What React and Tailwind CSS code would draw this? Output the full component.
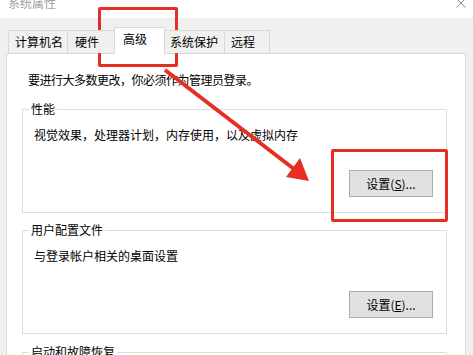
import React from 'react';

const tabs = [
  { label: '计算机名', w: 'w-[59px]', pl: 'pl-[6px]', cls: 'border-l' },
  { label: '硬件', w: 'w-[47px]', pl: 'pl-[7px]', cls: 'border-l' },
  { label: '高级', w: 'w-[51px]', pl: 'pl-[8px]', cls: 'border-l border-r', active: true },
  { label: '系统保护', w: 'w-[59px]', pl: 'pl-[5px]', cls: '' },
  { label: '远程', w: 'w-[46px]', pl: 'pl-[6px]', cls: 'border-l border-r' },
];

const SettingsButton = ({ hotkey }) => (
  <div className="flex justify-end mt-[28px] pr-[13px]">
    <button className="w-[84px] h-[27px] bg-[#e1e1e1] border border-[#adadad] text-[12px] leading-[14px] text-black">
      设置(<span className="underline">{hotkey}</span>)...
    </button>
  </div>
);

const Group = ({ title, desc, hotkey, className = '' }) => (
  <fieldset className={`border border-[#dcdcdc] ml-[15px] w-[425px] p-0 ${className}`}>
    <legend className="ml-[6px] px-[2px] text-[12px] leading-[14px] text-black">{title}</legend>
    {desc && (
      <div className="pt-[12px] pl-[11px] pb-[15px]">
        <p className="text-[12px] leading-[14px] text-black">{desc}</p>
        <SettingsButton hotkey={hotkey} />
      </div>
    )}
  </fieldset>
);

export default function App() {
  return (
    <div className="w-[473px] h-[355px] overflow-hidden relative bg-[#f0f0f0] font-['Noto_Sans_CJK_SC','Noto_Sans',sans-serif]">
      {/* title bar */}
      <div className="h-[18px] bg-white flex items-start justify-between pl-[8px] pr-[7px]">
        <span className="text-[12px] leading-[12px] -mt-[3px] text-[#a0a0a0]">系统属性</span>
        <svg width="10" height="10" viewBox="0 0 10 10" className="-mt-[2px]">
          <path d="M0.5 0.5 L9.5 9.5 M9.5 0.5 L0.5 9.5" stroke="#8a8a8a" strokeWidth="1" fill="none" />
        </svg>
      </div>

      {/* tabs */}
      <div className="flex items-end h-[23px] mt-[12px] pl-[8px] relative z-10">
        {tabs.map((t) => (
          <div
            key={t.label}
            className={`${t.w} ${t.pl} ${t.cls} border-t border-[#d9d9d9] text-[12px] text-black flex items-center ${
              t.active ? 'h-[27px] -mb-px bg-white pb-[4px]' : 'h-[23px] bg-[#f0f0f0]'
            }`}
          >
            {t.label}
          </div>
        ))}
      </div>

      {/* panel */}
      <div className="mx-[6px] w-[460px] h-[320px] border border-[#d9d9d9] bg-white">
        <p className="pt-[18px] pl-[21px] text-[12px] leading-[16px] tracking-[-0.5px] text-black">
          要进行大多数更改，你必须作为管理员登录。
        </p>
        <Group
          className="mt-[14px]"
          title="性能"
          desc="视觉效果，处理器计划，内存使用，以及虚拟内存"
          hotkey="S"
        />
        <Group
          className="mt-[10px]"
          title="用户配置文件"
          desc="与登录帐户相关的桌面设置"
          hotkey="E"
        />
        <Group className="mt-[11px] h-[40px]" title="启动和故障恢复" />
      </div>

      {/* red annotations */}
      <div className="absolute left-[98px] top-[7px] w-[80px] h-[60px] border-[3px] border-[#e62e25] rounded-[2px]" />
      <div className="absolute left-[331px] top-[149px] w-[117px] h-[73px] border-[3px] border-[#e62e25] rounded-[2px]" />
      <svg className="absolute left-0 top-0" width="473" height="355" viewBox="0 0 473 355">
        <line x1="165" y1="70" x2="294" y2="169" stroke="#e62e25" strokeWidth="4" />
        <polygon points="309,181 286,177 300,158" fill="#e62e25" />
      </svg>
    </div>
  );
}
